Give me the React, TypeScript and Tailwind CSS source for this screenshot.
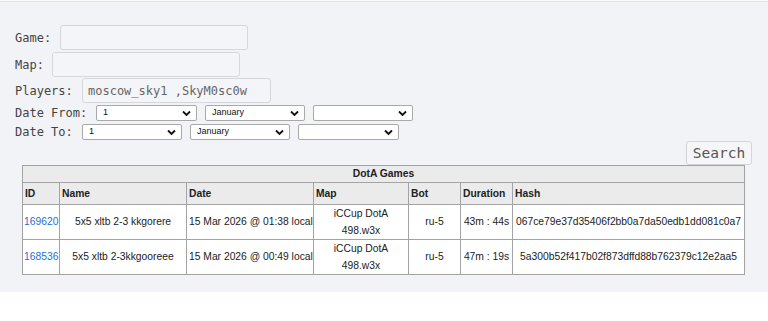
import React from 'react';

const games = [
    {
        id: '169620',
        name: '5x5 xltb 2-3 kkgorere',
        date: '15 Mar 2026 @ 01:38 local',
        map: ['iCCup DotA', '498.w3x'],
        bot: 'ru-5',
        duration: '43m : 44s',
        hash: '067ce79e37d35406f2bb0a7da50edb1dd081c0a7',
    },
    {
        id: '168536',
        name: '5x5 xltb 2-3kkgooreee',
        date: '15 Mar 2026 @ 00:49 local',
        map: ['iCCup DotA', '498.w3x'],
        bot: 'ru-5',
        duration: '47m : 19s',
        hash: '5a300b52f417b02f873dffd88b762379c12e2aa5',
    },
];

function Select({ value, width }: { value: string; width: string }) {
    return (
        <div className={`relative h-[16px] ${width} bg-white border border-[#a9a9a9] rounded-[2px] flex items-center pl-[6px] text-[9px] text-[#111] font-['Liberation_Sans',sans-serif]`}>
            {value}
            <svg className="absolute right-[5px] top-[4px]" width="9" height="7" viewBox="0 0 9 7">
                <path d="M1 1.5 L4.5 5 L8 1.5" fill="none" stroke="#111" strokeWidth="1.8" />
            </svg>
        </div>
    );
}

export default function App() {
    const th = 'border border-[#a3a3a3] px-[2px] text-left font-bold';
    const td = 'border border-[#a3a3a3] px-[2px] text-center';

    return (
        <div className="min-h-screen bg-white">
            <div className="h-[292px] bg-[#f2f3f7]">
                <div className="h-[2px] bg-[#fbfbfc] border-b border-[#e2e3e6]" />
                <div className="pl-[15px] pt-[23px] font-['DejaVu_Sans_Mono',monospace] text-[12px] text-[#444]">
                    <div className="flex items-center h-[25px]">
                        <span className="w-[45px]">Game:</span>
                        <div className="w-[188px] h-[25px] rounded-[3px] border border-[#d6d7db] bg-[#f4f5f8]" />
                    </div>
                    <div className="flex items-center h-[25px] mt-[2px]">
                        <span className="w-[37px]">Map:</span>
                        <div className="w-[188px] h-[25px] rounded-[3px] border border-[#d6d7db] bg-[#f4f5f8]" />
                    </div>
                    <div className="flex items-center h-[25px] mt-[1px]">
                        <span className="w-[67px]">Players:</span>
                        <div className="w-[189px] h-[25px] rounded-[3px] border border-[#d6d7db] bg-[#f4f5f8] flex items-center pl-[5px] text-[#666]">
                            moscow_sky1 ,SkyM0sc0w
                        </div>
                    </div>
                    <div className="flex items-center h-[19px]">
                        <span className="w-[81px]">Date From:</span>
                        <div className="flex gap-[8px]">
                            <Select value="1" width="w-[101px]" />
                            <Select value="January" width="w-[100px]" />
                            <Select value="" width="w-[100px]" />
                        </div>
                    </div>
                    <div className="flex items-center h-[19px]">
                        <span className="w-[67px]">Date To:</span>
                        <div className="flex gap-[8px]">
                            <Select value="1" width="w-[100px]" />
                            <Select value="January" width="w-[100px]" />
                            <Select value="" width="w-[101px]" />
                        </div>
                    </div>
                    <div className="flex justify-end pr-[16px]">
                        <button className="w-[66px] h-[24px] rounded-[3px] border border-[#d3d4d8] bg-[#f6f6f8] text-[14.5px] text-[#555] leading-none">
                            Search
                        </button>
                    </div>
                </div>
                <table className="ml-[22px] w-[723px] table-fixed border-collapse border border-[#8f8f8f] font-['Liberation_Sans',Arial,sans-serif] text-[10.3px] text-[#222]">
                    <colgroup>
                        <col className="w-[37px]" />
                        <col className="w-[127px]" />
                        <col className="w-[127px]" />
                        <col className="w-[95px]" />
                        <col className="w-[52px]" />
                        <col className="w-[52px]" />
                        <col />
                    </colgroup>
                    <thead className="bg-[#ebebeb]">
                        <tr className="h-[17px]">
                            <th colSpan={7} className="border border-[#a3a3a3] text-center font-bold">
                                DotA Games
                            </th>
                        </tr>
                        <tr className="h-[22px]">
                            <th className={th}>ID</th>
                            <th className={th}>Name</th>
                            <th className={th}>Date</th>
                            <th className={th}>Map</th>
                            <th className={th}>Bot</th>
                            <th className={th}>Duration</th>
                            <th className={th}>Hash</th>
                        </tr>
                    </thead>
                    <tbody className="bg-white">
                        {games.map(g => (
                            <tr key={g.id} className="h-[32px]">
                                <td className="border border-[#a3a3a3] px-[1px] text-left">
                                    <a href="#" className="text-[#1f6fd6]">{g.id}</a>
                                </td>
                                <td className={td}>{g.name}</td>
                                <td className={`${td} whitespace-nowrap`}>{g.date}</td>
                                <td className={`${td} leading-[17px]`}>
                                    {g.map[0]}
                                    <br />
                                    {g.map[1]}
                                </td>
                                <td className={td}>{g.bot}</td>
                                <td className={`${td} whitespace-nowrap`}>{g.duration}</td>
                                <td className={td}>{g.hash}</td>
                            </tr>
                        ))}
                    </tbody>
                </table>
            </div>
        </div>
    );
}
